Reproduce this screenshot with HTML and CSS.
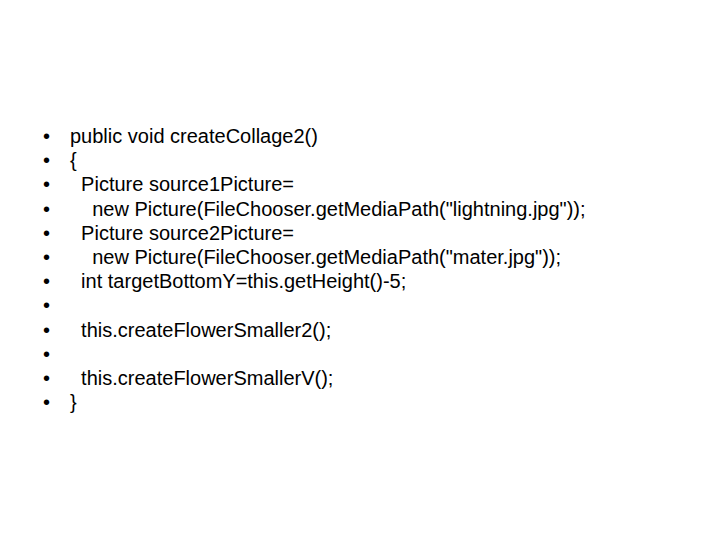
FILE: index.html
```html
<!DOCTYPE html>
<html>
<head>
<meta charset="utf-8">
<link rel="stylesheet" href="styles.css">
</head>
<body>
<ul class="code">
<li><span class="dot">•</span><span class="txt">public void createCollage2()</span></li>
<li><span class="dot">•</span><span class="txt">{</span></li>
<li><span class="dot">•</span><span class="txt">  Picture source1Picture=</span></li>
<li><span class="dot">•</span><span class="txt">    new Picture(FileChooser.getMediaPath("lightning.jpg"));</span></li>
<li><span class="dot">•</span><span class="txt">  Picture source2Picture=</span></li>
<li><span class="dot">•</span><span class="txt">    new Picture(FileChooser.getMediaPath("mater.jpg"));</span></li>
<li><span class="dot">•</span><span class="txt">  int targetBottomY=this.getHeight()-5;</span></li>
<li><span class="dot">•</span><span class="txt"> </span></li>
<li><span class="dot">•</span><span class="txt">  this.createFlowerSmaller2();</span></li>
<li><span class="dot">•</span><span class="txt"> </span></li>
<li><span class="dot">•</span><span class="txt">  this.createFlowerSmallerV();</span></li>
<li><span class="dot">•</span><span class="txt">}</span></li>
</ul>
</body>
</html>
```
FILE: styles.css
```css
html, body {
  margin: 0;
  padding: 0;
  background: #fff;
}
body {
  width: 720px;
  height: 540px;
  font-family: "Liberation Sans", Arial, sans-serif;
  font-size: 20px;
  color: #000;
}
.code {
  list-style: none;
  margin: 0;
  padding: 124px 0 0 43px;
}
.code li {
  display: flex;
  height: 24.2px;
  line-height: 24.2px;
}
.dot {
  width: 27px;
  flex: none;
}
.txt {
  white-space: pre;
}
```
